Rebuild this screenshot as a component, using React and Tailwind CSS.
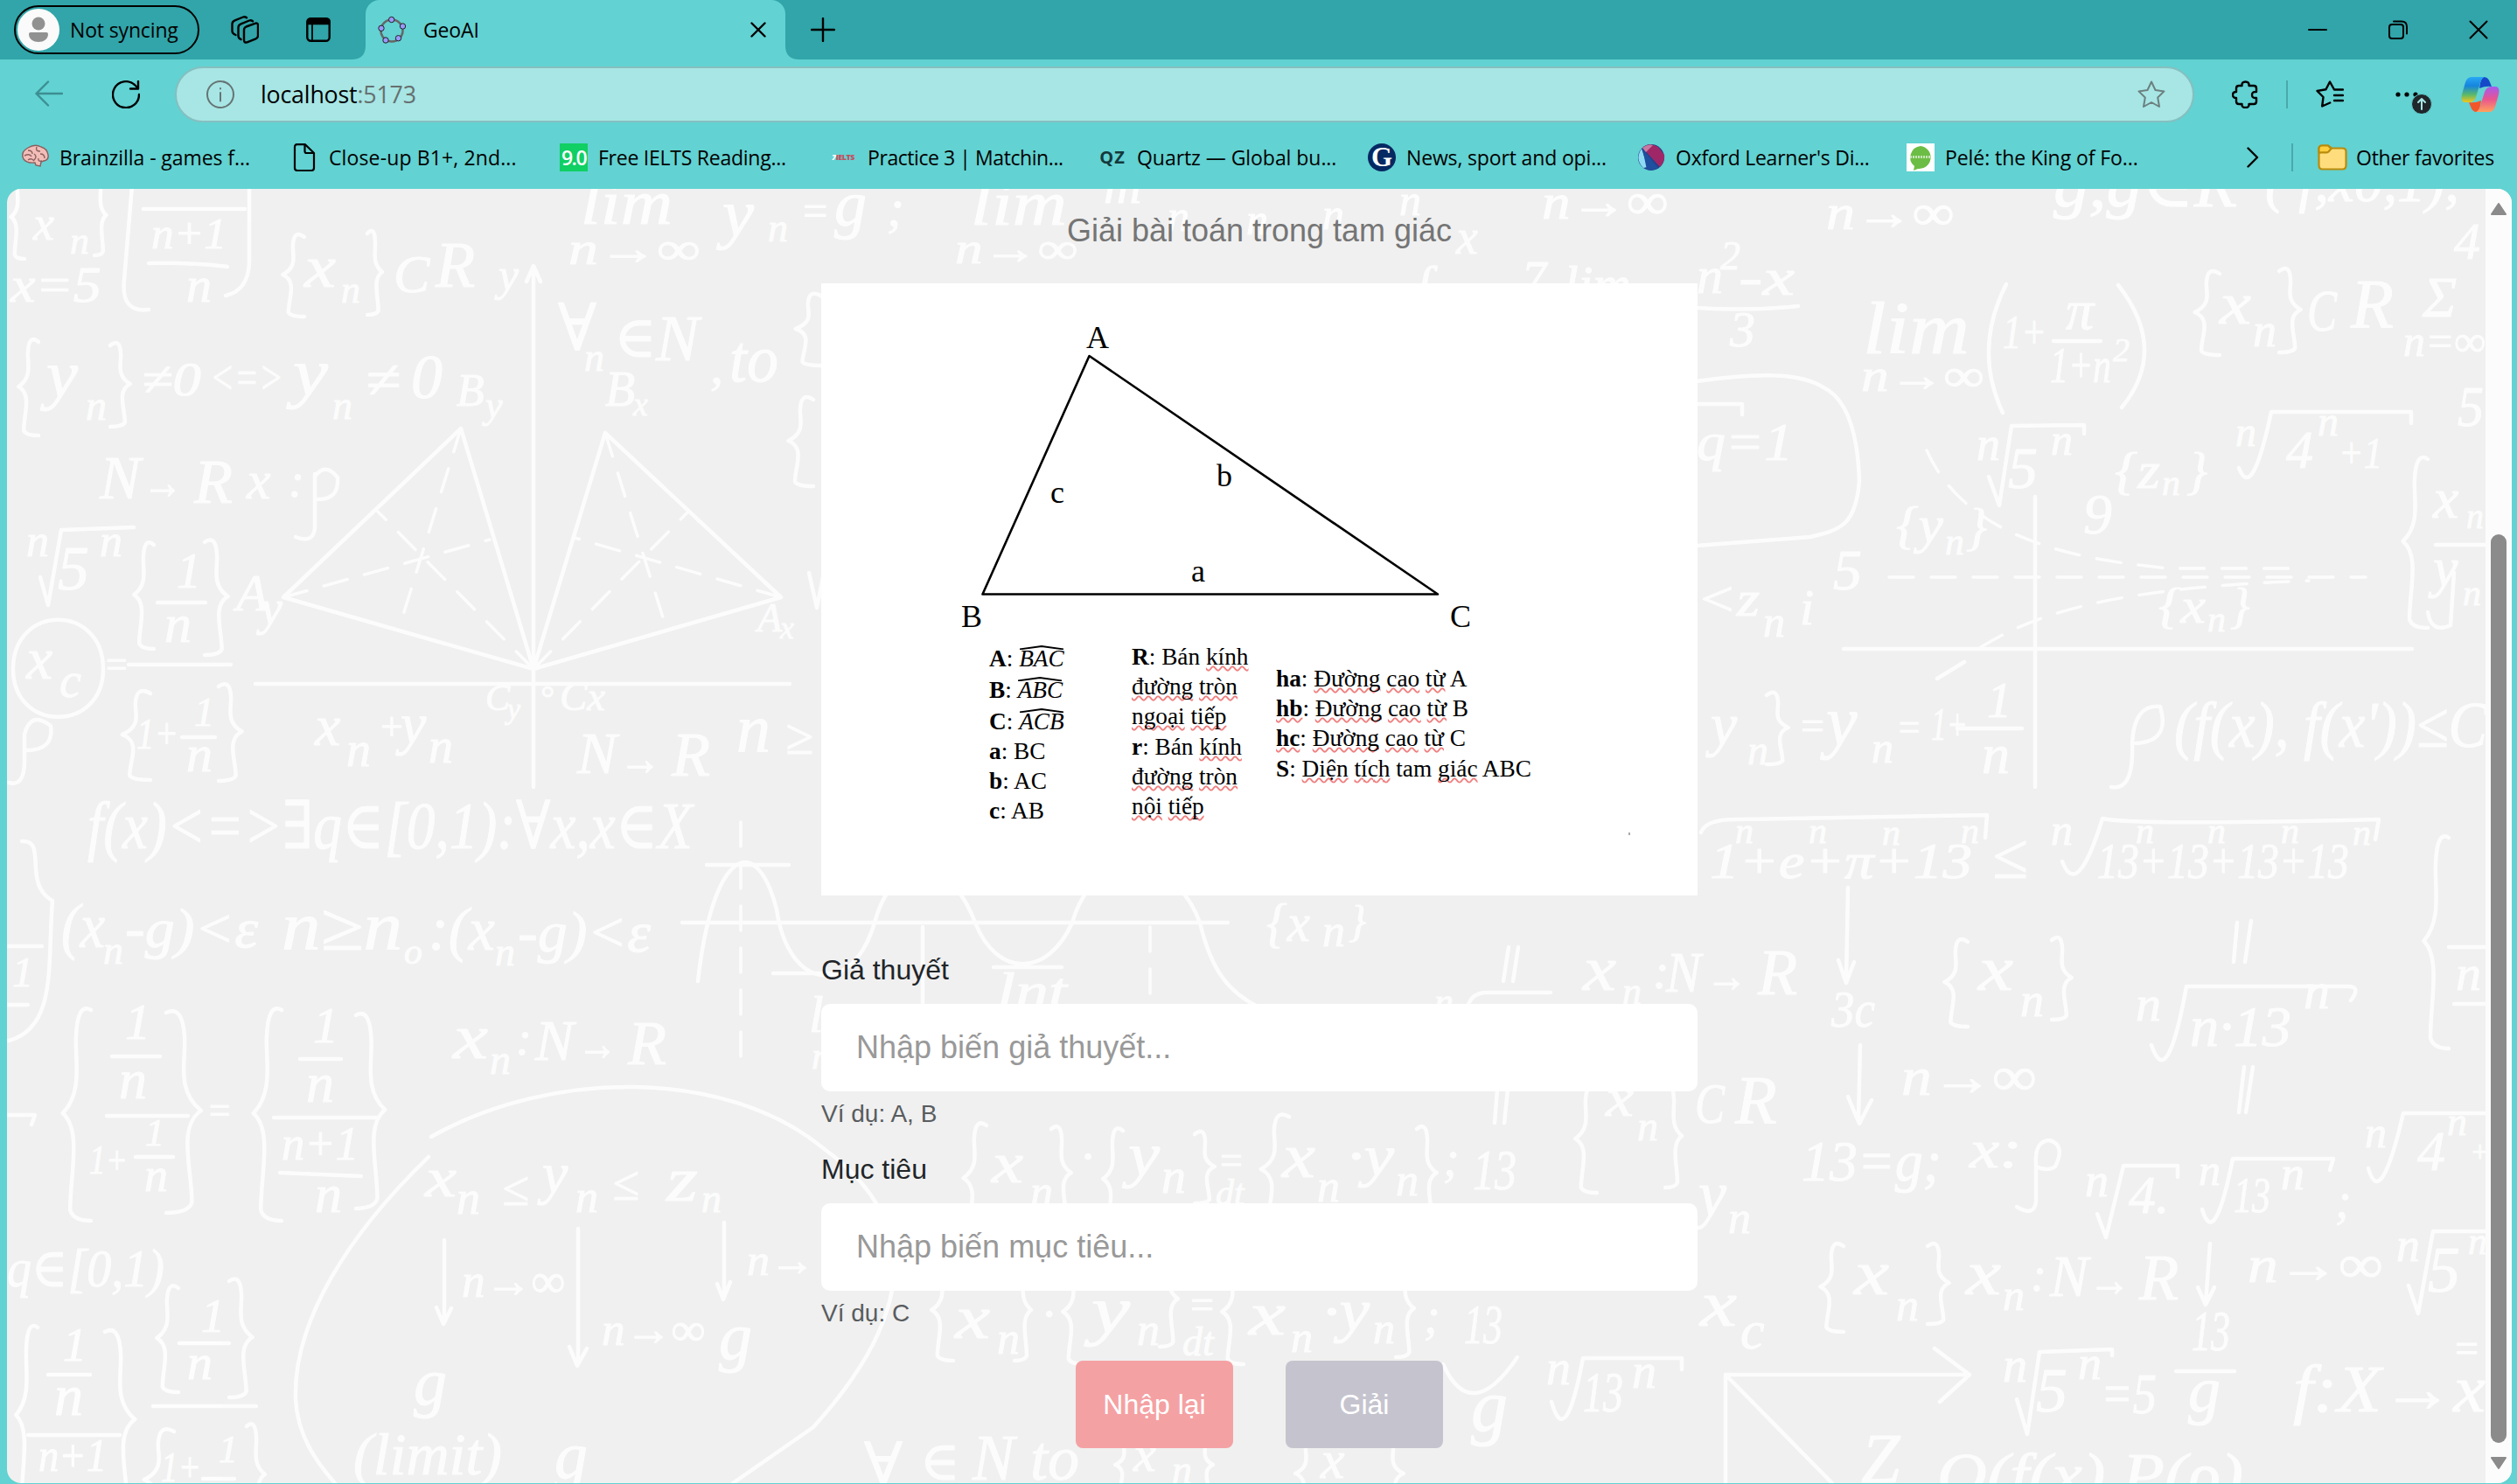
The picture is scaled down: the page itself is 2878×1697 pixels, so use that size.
import React from "react";

/* ---------- chalk formula backdrop ---------- */

// [x, baseline, size, text, optional length]
const GLYPHS = [
  [38, 274, 54, "x"], [80, 290, 44, "n"], [173, 284, 50, "n+1", 86], [213, 345, 58, "n"],
  [12, 345, 58, "x=5", 104], [348, 328, 68, "x", 36], [390, 346, 44, "n"], [450, 334, 62, "C"], [498, 328, 74, "R"],
  [570, 332, 52, "y"], [664, 256, 72, "lim", 105], [650, 302, 52, "n→∞", 150], [826, 270, 76, "y", 36], [878, 276, 46, "n"],
  [915, 258, 50, "="], [954, 258, 74, "g"], [1014, 258, 60, ";"], [1110, 257, 72, "lim", 110], [1092, 301, 50, "n→∞", 140],
  [1262, 232, 60, "m"], [1335, 264, 50, "n"], [1425, 268, 50, "n"], [1512, 262, 50, "n"], [1600, 246, 50, "n"], [1665, 290, 56, "x"],
  [1620, 345, 60, "ſ"], [1740, 338, 56, "7"], [1788, 345, 60, "lim"], [1763, 250, 58, "n→∞", 144],
  [638, 400, 74, "∀", 44], [668, 424, 46, "n"], [702, 408, 66, "∈"], [750, 412, 74, "N"], [812, 438, 60, ","], [834, 436, 76, "to", 56],
  [692, 464, 56, "B"], [724, 475, 38, "x"], [522, 464, 52, "B"], [555, 478, 44, "y"],
  [53, 454, 76, "y", 36], [98, 480, 48, "n"], [162, 452, 54, "≠0", 68], [240, 450, 54, "<=>", 84], [335, 452, 76, "y", 40], [380, 479, 46, "n"],
  [418, 455, 62, "≠", 40], [470, 455, 72, "0"], [114, 570, 70, "N"], [163, 570, 54, "→", 46], [222, 575, 72, "R"], [282, 570, 62, "x"], [330, 568, 54, ":"],
  [30, 636, 52, "n"], [66, 674, 72, "5"], [114, 636, 52, "n"], [202, 672, 56, "1"], [188, 734, 62, "n"],
  [270, 698, 60, "A"], [298, 714, 56, "y"], [866, 722, 46, "A"], [892, 730, 36, "x"], [30, 776, 68, "x"], [68, 797, 56, "c"], [118, 774, 44, "="],
  [156, 856, 50, "1+", 48], [222, 830, 46, "1"], [213, 882, 60, "n"], [360, 852, 66, "x"], [396, 876, 56, "n"], [432, 846, 46, "+"], [458, 850, 66, "y"], [490, 872, 56, "n"],
  [555, 812, 42, "C"], [580, 822, 34, "y"], [617, 812, 40, "°"], [640, 812, 46, "Cx", 52],
  [660, 884, 68, "N"], [708, 886, 54, "→", 48], [768, 887, 72, "R"], [842, 860, 78, "n"], [898, 862, 58, "≥"],
  [100, 970, 76, "f(x)<=>∃q∈[0,1):∀x,x∈X", 692], [70, 1083, 72, "(x", 50], [118, 1102, 46, "n"], [143, 1083, 64, "-g)<ε", 152],
  [322, 1086, 78, "n≥n", 138], [462, 1102, 42, "o"], [490, 1086, 70, ":(x", 76], [566, 1104, 46, "n"], [592, 1088, 66, "-g)<ε", 152],
  [14, 1128, 48, "1"], [143, 1188, 58, "1"], [136, 1256, 64, "n"], [102, 1342, 46, "1+", 44], [166, 1310, 44, "1"], [165, 1362, 54, "n"], [236, 1284, 44, "="],
  [358, 1192, 58, "1"], [350, 1260, 64, "n"], [322, 1326, 54, "n+1", 88], [360, 1386, 62, "n"],
  [518, 1210, 72, "x", 40], [560, 1228, 48, "n"], [590, 1206, 54, ":"], [612, 1212, 66, "N"], [660, 1212, 54, "→", 46], [718, 1217, 72, "R"],
  [486, 1368, 64, "x", 36], [522, 1388, 54, "n"], [574, 1378, 56, "≤"], [620, 1364, 66, "y"], [658, 1386, 52, "n"], [700, 1372, 56, "≤"], [762, 1373, 72, "z", 36], [802, 1386, 46, "n"],
  [528, 1483, 54, "n→∞", 118], [688, 1538, 52, "n→∞", 118], [854, 1458, 50, "n→", 78], [473, 1606, 76, "g"], [822, 1554, 76, "g"], [634, 1690, 76, "g"], [404, 1686, 68, "(limit)", 170],
  [8, 1471, 62, "q∈[0,1)", 180], [230, 1523, 54, "1"], [214, 1577, 58, "n"], [72, 1556, 54, "1"], [62, 1618, 66, "n"], [44, 1682, 52, "n+1", 78], [184, 1694, 48, "1+", 46], [250, 1672, 44, "1"],
  [2088, 262, 56, "n→∞", 146], [2348, 236, 72, "g,g∈R", 210], [2590, 230, 66, "( f,x0,1),", 222], [2806, 296, 60, "4"],
  [1940, 335, 60, "n"], [1967, 308, 46, "2"], [1988, 337, 60, "-x", 64], [1978, 396, 58, "3"],
  [2130, 404, 84, "lim", 122], [2128, 447, 52, "n→∞", 140], [2290, 398, 54, "1+", 50], [2362, 376, 64, "π"], [2344, 437, 56, "1+n", 70], [2416, 413, 38, "2"],
  [2538, 370, 68, "x", 36], [2576, 396, 54, "n"], [2638, 378, 68, "C", 34], [2688, 375, 80, "R"], [2770, 362, 66, "Σ"], [2748, 407, 50, "n=∞", 94], [2810, 487, 66, "5", 30],
  [1940, 526, 62, "q=1", 110], [2260, 526, 54, "n"], [2296, 558, 68, "5"], [2345, 520, 50, "n"], [2418, 558, 60, "{z", 52], [2472, 566, 42, "n"], [2500, 558, 60, "}"],
  [2556, 510, 48, "n"], [2614, 535, 62, "4"], [2650, 498, 48, "n"], [2674, 535, 50, "+1", 50], [2168, 620, 60, "{y", 54], [2224, 634, 44, "n"], [2248, 622, 60, "}"],
  [2382, 610, 66, "9"], [2096, 674, 66, "5"], [2468, 712, 56, "{x", 54], [2524, 722, 42, "n"], [2550, 712, 56, "}"],
  [2782, 592, 66, "x"], [2820, 604, 40, "n"], [2782, 670, 64, "y"], [2816, 692, 42, "n"], [1940, 704, 58, "<z", 72], [2016, 728, 50, "n"], [2058, 714, 58, "i"],
  [1956, 852, 68, "y"], [1998, 874, 48, "n"], [2056, 846, 48, "="], [2088, 852, 80, "y"], [2140, 872, 50, "n"], [2168, 846, 44, "="], [2208, 846, 52, "1+", 42], [2272, 820, 56, "1"], [2266, 884, 64, "n"],
  [2486, 854, 74, "(f(x), f(x'))≤C", 358],
  [1955, 1004, 56, "1+e+π+13", 300], [1984, 964, 42, "n"], [2068, 964, 42, "n"], [2152, 966, 42, "n"], [2242, 964, 42, "n"], [2278, 1004, 74, "≤"], [2345, 966, 50, "n"],
  [2398, 1004, 56, "13+13+13+13", 288], [2442, 964, 42, "n"], [2524, 964, 42, "n"], [2608, 964, 42, "n"], [2690, 966, 42, "n"],
  [2094, 1174, 60, "3c", 50], [2010, 1137, 74, "R"], [1810, 1132, 72, "x", 38], [1855, 1148, 44, "n"], [1890, 1130, 56, ":"], [1905, 1134, 66, "N", 40], [1950, 1134, 52, "→", 48],
  [2262, 1132, 72, "x", 40], [2310, 1162, 54, "n"], [2442, 1167, 58, "n"], [2504, 1196, 66, "n·13", 116], [2634, 1153, 60, "n"], [2808, 1132, 58, "n"],
  [1836, 1276, 62, "x", 32], [1872, 1304, 48, "n"], [1938, 1284, 66, "C", 34], [1984, 1284, 78, "R"], [2174, 1252, 62, "n→∞", 154],
  [2060, 1350, 66, "13=g;", 160], [2252, 1335, 62, "x:", 60], [2384, 1368, 54, "n"], [2434, 1387, 62, "4."], [2514, 1355, 50, "n"], [2554, 1386, 58, "13", 42], [2608, 1360, 54, "n"], [2670, 1392, 56, ";"],
  [2704, 1312, 50, "n"], [2764, 1338, 64, "4"], [2798, 1298, 46, "n"], [2824, 1328, 34, "+"], [1942, 1390, 74, "y", 32], [1976, 1410, 52, "n"], [1944, 1516, 74, "x", 42], [1990, 1542, 62, "c"],
  [2120, 1480, 72, "x", 40], [2168, 1510, 52, "n"], [2248, 1480, 72, "x", 40], [2290, 1498, 50, "n"], [2322, 1476, 54, ":"], [2344, 1482, 68, "N", 44], [2388, 1482, 54, "→", 48], [2446, 1486, 74, "R"],
  [2570, 1466, 60, "n→∞", 154], [2740, 1442, 54, "n"], [2776, 1477, 74, "5"], [2822, 1434, 44, "n"], [2506, 1544, 66, "13", 44], [2502, 1614, 74, "g"],
  [2290, 1580, 56, "n"], [2328, 1614, 72, "5"], [2376, 1577, 54, "n"], [2402, 1616, 66, "=5", 64], [2622, 1614, 76, "f:X→x", 220], [2804, 1558, 48, "="],
  [2128, 1695, 80, "Z"], [2215, 1710, 70, "O(f(x)  P(ρ)", 350],
  [1134, 1352, 66, "x", 36], [1178, 1380, 52, "n"], [1236, 1342, 58, "·"], [1290, 1344, 70, "y", 36], [1328, 1364, 56, "n"], [1392, 1342, 46, "="], [1390, 1378, 42, "dt"],
  [1466, 1346, 72, "x", 38], [1506, 1374, 52, "n"], [1540, 1344, 66, "·y", 54], [1596, 1367, 52, "n"], [1650, 1344, 56, ";"], [1684, 1360, 66, "13", 50],
  [1092, 1530, 70, "x", 40], [1140, 1548, 52, "n"], [1192, 1522, 56, "·"], [1248, 1524, 76, "y", 44], [1300, 1538, 52, "n"], [1358, 1508, 48, "="], [1352, 1550, 46, "dt"],
  [1428, 1526, 70, "x", 42], [1476, 1546, 50, "n"], [1512, 1522, 68, "·y", 54], [1570, 1536, 50, "n"], [1628, 1524, 56, ";"], [1674, 1536, 64, "13", 44],
  [1768, 1583, 56, "n"], [1810, 1614, 66, "13", 46], [1866, 1587, 56, "n"], [1682, 1636, 84, "g"],
  [988, 1698, 68, "∀", 44], [1052, 1692, 62, "∈"], [1112, 1692, 74, "N", 48], [1178, 1692, 72, "to", 56], [1296, 1682, 58, "x"], [1340, 1696, 46, "n"], [1510, 1690, 62, "x"],
  [1448, 1076, 62, "{x", 50], [1512, 1082, 52, "n"], [1542, 1070, 50, "}"], [1140, 1152, 56, "lnt", 80], [1640, 1160, 44, "n"],
  [925, 1180, 60, "l"], [928, 1222, 44, "n"],
];

// [x, top, width, height, side]
const BRACES = [
  [12, 200, 16, 96, "l"], [108, 200, 14, 92, "r"], [322, 266, 26, 96, "l"], [420, 262, 18, 98, "r"],
  [20, 386, 24, 112, "l"], [126, 390, 24, 98, "r"], [152, 618, 24, 124, "l"], [234, 615, 28, 134, "r"],
  [138, 788, 34, 104, "l"], [250, 780, 28, 113, "r"], [70, 1150, 34, 246, "l"], [190, 1153, 42, 234, "r"],
  [288, 1150, 34, 246, "l"], [407, 1156, 35, 226, "r"], [178, 1468, 26, 124, "l"], [262, 1460, 28, 138, "r"],
  [17, 1513, 26, 210, "l"], [120, 1518, 36, 210, "r"], [163, 1632, 36, 120, "l"], [282, 1626, 22, 120, "r"],
  [908, 334, 32, 84, "l"], [900, 452, 30, 104, "l"], [2508, 308, 30, 98, "l"], [2606, 305, 26, 98, "r"],
  [2746, 520, 30, 198, "l"], [2020, 790, 26, 84, "r"], [2770, 953, 30, 246, "l"], [2222, 1072, 28, 102, "l"], [2346, 1070, 24, 96, "r"],
  [1800, 1240, 26, 124, "l"], [1904, 1240, 20, 118, "r"], [2080, 1420, 28, 103, "l"], [2204, 1420, 26, 94, "r"],
  [1100, 1282, 28, 130, "l"], [1202, 1286, 24, 110, "r"], [1260, 1288, 24, 120, "l"], [1366, 1292, 24, 84, "r"], [1440, 1272, 34, 130, "l"], [1620, 1286, 24, 110, "r"],
  [1064, 1440, 26, 116, "l"], [1160, 1440, 20, 116, "r"], [1214, 1440, 26, 120, "l"], [1326, 1430, 22, 110, "r"], [1396, 1440, 26, 120, "l"], [1596, 1440, 22, 112, "r"],
  [1274, 1640, 22, 70, "l"], [1368, 1640, 20, 70, "r"], [1480, 1640, 26, 90, "l"], [1580, 1640, 26, 90, "r"],
];

const bracePath = (x, y, w, h, side) => {
  const px = (t) => (side === "l" ? x + w * t : x + w * (1 - t));
  const m = y + h * 0.5;
  return `M${px(1)} ${y + 5} Q${px(0.55)} ${y - 4} ${px(0.5)} ${y + h * 0.14} C${px(0.45)} ${y + h * 0.25} ${px(0.75)} ${y + h * 0.4} ${px(0.05)} ${m} C${px(0.7)} ${y + h * 0.58} ${px(0.3)} ${y + h * 0.78} ${px(0.3)} ${y + h * 0.95} Q${px(0.4)} ${y + h} ${px(1)} ${y + h}`;
};

const STROKES = [
  "M152 200 L142 320 Q138 358 170 354", "M285 200 V300 Q284 332 258 338", "M164 239 H280", "M170 301 Q220 300 260 305",
  "M610 305 V900 M602 322 L610 304 L618 322", "M292 782 H903",
  "M527 490 L324 683 L610 765 Z", "M692 495 L893 683 L610 765 Z",
  "M360 542 V604 Q358 622 338 614 M360 545 Q372 528 386 546 Q388 572 362 571",
  "M46 660 L55 692 L70 606 L153 603", "M180 689 H235", "M147 760 H264", "M15 765 C15 690 118 690 118 765 C118 838 15 838 15 765",
  "M208 843 H246", "M10 895 Q28 900 28 870 V840 Q35 812 58 830 Q62 858 30 858",
  "M25 962 C55 960 25 1010 60 1030 C54 1100 66 1175 10 1190", "M8 1082 H48 M8 1149 H32",
  "M798 1122 C815 970 865 950 888 1040 C902 1135 975 1140 1000 1055 C1022 975 1085 975 1115 1055 C1140 1118 1198 1118 1226 1055 C1250 970 1340 970 1372 1055 C1385 1110 1405 1135 1440 1152",
  "M808 989 H902 M780 1055 H1404 M884 1113 H960 M1136 1106 H1214 M1055 1060 V1150",
  "M128 1208 H183 M122 1276 H215 M155 1323 H198 M343 1211 H390 M313 1278 H430 M320 1341 L413 1345",
  "M8 1275 H40 L36 1286",
  "M493 1300 C630 1222 830 1222 940 1312 C1062 1400 1040 1510 930 1632 L838 1696",
  "M490 1323 C400 1410 335 1510 338 1600 C340 1640 360 1670 383 1696",
  "M508 1418 V1510 M499 1495 L507 1514 L516 1496 M661 1405 V1560 M651 1540 L660 1562 L671 1542 M828 1398 V1484 M820 1468 L827 1486 L835 1466",
  "M205 1536 H262 M175 1608 H293 M55 1572 H103 M32 1641 H137 M232 1691 H268",
  "M925 655 L934 695 L945 640",
  "M1940 352 Q2000 356 2056 350", "M2294 325 Q2256 400 2290 472 M2422 326 Q2480 400 2426 466 M2348 390 H2402",
  "M1940 436 C2010 426 2058 426 2085 443 C2120 460 2125 520 2126 550 C2122 600 2105 606 2070 614 L1940 624 M1940 462 H1992 V474",
  "M2274 545 L2286 578 L2300 487 L2383 486 V496", "M2560 535 Q2575 575 2597 471 H2757 V484",
  "M2327 568 V900 M2108 742 H2758 M2215 776 L2246 757", "M2785 623 H2842 M2806 655 L2802 715 Q2780 725 2776 700",
  "M2238 833 H2312", "M2414 900 Q2440 905 2438 850 Q2440 805 2470 808 Q2482 848 2442 850",
  "M1945 952 Q1950 936 1990 937 L2272 932 L2270 958", "M2358 985 Q2375 1030 2404 936 Q2440 944 2720 937 L2716 960",
  "M2113 1015 L2111 1120 M2102 1098 L2111 1124 L2120 1100 M2127 1195 L2125 1280 M2113 1254 L2126 1285 L2140 1258",
  "M2558 1055 L2554 1100 M2574 1053 L2567 1100 M2566 1220 L2560 1272 M2576 1220 L2568 1272",
  "M2460 1195 Q2478 1250 2500 1128 H2685 Q2700 1128 2688 1144", "M2800 1083 H2842 M2806 1148 H2842",
  "M2398 1388 L2408 1415 L2428 1333 L2490 1333 V1346", "M2518 1383 Q2532 1430 2553 1325 L2668 1325 L2664 1338",
  "M2708 1336 Q2722 1385 2748 1273 H2842",
  "M2328 1332 V1374 Q2326 1392 2306 1380 M2328 1332 Q2326 1304 2344 1304 Q2362 1310 2350 1334 Q2342 1340 2328 1334",
  "M2527 1422 L2522 1490 M2513 1472 L2522 1492 L2532 1472", "M2754 1470 L2765 1502 L2782 1408 H2842",
  "M2488 1568 H2555", "M2306 1600 L2318 1640 L2332 1546 L2415 1543 V1550",
  "M1973 1696 V1572 H2246 M2212 1542 L2252 1572 L2218 1603 M1973 1572 L2095 1696",
  "M1774 1603 Q1790 1660 1810 1553 H1923 V1566", "M1650 1560 Q1682 1630 1735 1552",
  "M1725 1083 L1719 1122 M1736 1083 L1730 1122 M1712 1246 L1709 1284 M1724 1246 L1720 1284 M1678 1152 Q1682 1135 1700 1135 H1773",
];

const DASHES = [
  "M527 490 L457 716 M324 683 L560 617 M610 765 L432 585", "M692 495 L763 722 M893 683 L657 615 M610 765 L787 585",
  "M847 940 V1222 M1315 1060 V1148", "M2160 660 H2705",
  "M2203 515 C2250 620 2380 640 2480 650 L2635 650", "M2265 740 C2330 700 2420 672 2640 664",
];

function Backdrop() {
  return (
    <svg className="col-start-1 row-start-1 block h-[1480px] w-[2834px] opacity-85" viewBox="8 216 2834 1480" fill="none" stroke="#fff" strokeWidth="4.5" strokeLinecap="round" strokeLinejoin="round" aria-hidden="true">
      {STROKES.map((d) => <path key={d} d={d} />)}
      {DASHES.map((d) => <path key={d} d={d} strokeWidth="3.5" strokeDasharray="28 20" />)}
      {BRACES.map((b) => <path key={b.join()} d={bracePath(...b)} />)}
      <g className="font-['Liberation_Serif','DejaVu_Serif',serif] italic" fill="#fff" strokeWidth="1">
        {GLYPHS.map(([x, y, s, t, len]) => (
          <text key={`${x}-${y}`} x={x} y={y} fontSize={s} textLength={len} lengthAdjust="spacingAndGlyphs">{t}</text>
        ))}
      </g>
    </svg>
  );
}

/* ---------- browser chrome ---------- */

function Svg({ w = 32, h = 32, box, className = "", children, sw = 2.4 }) {
  return (
    <svg width={w} height={h} viewBox={box || `0 0 ${w} ${h}`} fill="none" stroke="currentColor" strokeWidth={sw} strokeLinecap="round" strokeLinejoin="round" className={`shrink-0 ${className}`}>
      {children}
    </svg>
  );
}

function TitleBar() {
  return (
    <div className="flex h-[68px] items-center bg-[#31a5a9] text-black">
      <div className="ml-4 flex h-14 w-[212px] items-center rounded-full border-2 border-black pl-0.5">
        <svg width="48" height="48" viewBox="0 0 48 48" className="shrink-0">
          <circle cx="24" cy="24" r="24" fill="#fafafa" />
          <circle cx="24" cy="17" r="7.5" fill="#919191" />
          <path d="M13 29q0-2 2-2h18q2 0 2 2c0 12-22 12-22 0z" fill="#919191" />
        </svg>
        <span className="ml-3 text-[23px] tracking-[-0.15px] whitespace-nowrap">Not syncing</span>
      </div>
      <Svg className="ml-9" sw={2.4}>
        <path d="M15 16.500q0-3 2.500-4l10-3.700q3.500-1 3.500 2v12q0 2.500-2.500 3.500l-10 4q-3.500 1-3.500-2.500z" />
        <path d="M11.500 27q-3-1-3-4V13.500q0-3 3-4.200l9.500-3.800q2-.8 4 .8M5.500 22q-4-1.500-4-4.500V9.500q0-3 3-4.200l9.500-3.800q2-.8 4 .8" />
      </Svg>
      <Svg w={28} h={28} className="ml-[54px]" sw={2.4}>
        <rect x="1.300" y="1.300" width="25.400" height="25.400" rx="4" />
        <path d="M2 3q1-1.500 3-1.500h18q3 0 3.500 2V7H2z" fill="currentColor" />
        <path d="M7 8v18" strokeWidth="1.800" />
      </Svg>
      <div className="ml-6 flex h-[68px] items-end">
        <svg width="16" height="16" viewBox="0 0 16 16"><path d="M16 0v16H0Q16 16 16 0z" fill="#62d2d2" /></svg>
        <div className="flex h-[68px] w-[480px] items-center rounded-t-2xl bg-[#62d2d2]">
          <svg width="32" height="32" viewBox="0 0 32 32" className="ml-[14px] shrink-0">
            <circle cx="16" cy="17" r="12.500" fill="none" stroke="#666" strokeWidth="2.500" />
            {[[15.7, 4.5], [28.5, 12], [23.5, 25.700], [9, 28], [4, 14.300]].map(([x, y]) => <circle key={x} cx={x} cy={y} r="3.200" fill="#9999ff" stroke="#222" strokeWidth="1" />)}
          </svg>
          <span className="ml-5 text-[23px] tracking-[-0.15px]">GeoAI</span>
          <Svg w={18} h={18} className="mr-[22px] ml-auto"><path d="M1.500 1.500l15 15M16.500 1.500l-15 15" /></Svg>
        </div>
        <svg width="16" height="16" viewBox="0 0 16 16"><path d="M0 0v16h16Q0 16 0 0z" fill="#62d2d2" /></svg>
      </div>
      <Svg w={28} h={28} className="ml-[13px]"><path d="M14 1v26M1 14h26" /></Svg>
      <Svg w={22} h={22} className="ml-auto" sw={2}><path d="M1 11h20" /></Svg>
      <Svg w={22} h={22} className="ml-[70px]" sw={2}>
        <rect x="1" y="5" width="16" height="16" rx="3" /><path d="M6 1.500h9q6 0 6 6v8" />
      </Svg>
      <Svg w={22} h={22} className="mr-[33px] ml-[70px]" sw={2}><path d="M1.500 1.500l19 19M20.500 1.500l-19 19" /></Svg>
    </div>
  );
}

function Toolbar() {
  return (
    <div className="flex h-20 items-center text-black">
      <Svg className="ml-10 text-[#3c8f92]"><path d="M31 15H1.500M15 1.500L1.500 15 15 28.500" /></Svg>
      <Svg className="ml-14" sw={2.400}><path d="M31 16A15 15 0 1 1 26 5l4 4M30 1v8.500h-9" /></Svg>
      <div className="ml-10 flex h-16 w-[2309px] items-center rounded-full border-2 border-[#86bfc0] bg-[#a7e6e4]">
        <Svg className="ml-[34px] text-[#667474]" sw={2}><circle cx="16" cy="16" r="15" /><path d="M16 14v9.500M16 9v.4" /></Svg>
        <span className="ml-[30px] text-[26.800px] tracking-[-0.200px]">localhost<span className="text-[#666f6f]">:5173</span></span>
        <Svg className="mr-[31px] ml-auto text-[#6c8080]" sw={2}><path d="M16 1.500l4.500 9.500 10 1.400-7.300 7.100 1.800 10.500L16 25l-9 5 1.800-10.500L1.500 12.400l10-1.400z" /></Svg>
      </div>
      <Svg w={30} className="ml-[43px]" sw={2.400}>
        <path d="M8 6h3.500q-.5-4.500 4-4.500T19.500 6H25q3 0 3 3v4q-5-.5-5 3.500t5 3.500V24q0 3-3 3h-5.500q.5 4-4 4t-4-4H8q-3 0-3-3v-4q-4 0-4-3.500T5 13V9q0-3 3-3z" />
      </Svg>
      <div className="ml-8 h-8 w-0.5 bg-[#4aa9ab]" />
      <Svg className="ml-8" sw={2.400}><path d="M31 10.500H21L16 1.500l-4.500 8.800-10 1.700 7 7-1.300 10.500 9-4M21 17h10M21 23h10" /></Svg>
      <Svg w={44} h={44} className="ml-[58px]">
        <g fill="currentColor" stroke="none"><circle cx="4" cy="22" r="2.600" /><circle cx="14" cy="22" r="2.600" /><circle cx="24" cy="22" r="2.600" /></g>
        <circle cx="31" cy="33" r="11.500" fill="#20262a" stroke="#62d2d2" strokeWidth="1" />
        <path d="M31 39V27.500M27 31l4-4 4 4" stroke="#a7e6e4" strokeWidth="2" />
      </Svg>
      <svg width="44" height="40" viewBox="0 0 44 40" className="ml-[32px] shrink-0">
        <defs>
          <linearGradient id="cpA" x1="0" y1="0" x2="0" y2="1"><stop offset="0" stopColor="#29a8f5" /><stop offset=".35" stopColor="#1585dd" /><stop offset=".7" stopColor="#5ab96a" /><stop offset="1" stopColor="#f5c51a" /></linearGradient>
          <linearGradient id="cpB" x1="0" y1="0" x2="0" y2="1"><stop offset="0" stopColor="#a45af0" /><stop offset=".5" stopColor="#e9548f" /><stop offset="1" stopColor="#ffa25c" /></linearGradient>
        </defs>
        <path d="M26 0Q31 0 33 6L35 11Q28 10 21 13L22 7Q24 0 26 0z" fill="#1549c8" />
        <path d="M18 40Q13 40 11 34L9 29Q16 30 23 27L22 33Q20 40 18 40z" fill="#f2572b" />
        <path d="M12 0H27Q23 1 21 10L17 23Q15 29 9 29H5Q-1 29 1 20L5 6Q7 0 12 0z" fill="url(#cpA)" />
        <path d="M32 40H17Q21 39 23 30L27 17Q29 11 35 11H39Q45 11 43 20L39 34Q37 40 32 40z" fill="url(#cpB)" />
      </svg>
    </div>
  );
}

const ICONS = {
  brain: (
    <svg width="32" height="32" viewBox="0 0 32 32"><path d="M8 5q8-5 15-1 7 2 8 9 1 6-5 7l-3 1-1 5-5-1-1-3q-9 1-13-4-4-8 5-13z" fill="#f3bdb8" stroke="#8a5f5e" strokeWidth="1.400" /><path d="M8 8q5 0 5 4M18 4q-2 5 4 5M4 14q6-3 8 1M15 12q4 3 0 7M22 12q5 0 5 5M8 19q4-3 7 1M20 17q-1 4 4 3" fill="none" stroke="#8a5f5e" strokeWidth="1.400" /></svg>
  ),
  file: (
    <svg width="32" height="32" viewBox="0 0 32 32" fill="none" stroke="#000" strokeWidth="2.200" strokeLinejoin="round"><path d="M7.500 1.200H17L27 11v17q0 3-3 3H8q-3 0-3-3V4q0-2.800 2.500-2.800zM16.500 1.500V9q0 2 2 2H27" /></svg>
  ),
  nine: <span className="flex h-8 w-8 items-center justify-center bg-[#10cf63] text-[23px] font-semibold tracking-[-1.500px] text-white">9.0</span>,
  ielts: <span className="flex h-8 w-8 items-center justify-center text-[9px] font-extrabold tracking-[-0.500px] text-[#c2505f]"><i className="text-white">7</i>IELTS</span>,
  qz: <span className="flex h-8 w-8 items-center justify-center text-[20px] font-bold tracking-[1px] text-[#14393b]">QZ</span>,
  guardian: (
    <span className="flex h-8 w-8 items-center justify-center rounded-full bg-[#052962] pb-0.5 font-['Liberation_Serif',serif] text-[31px] leading-none font-bold text-white">G</span>
  ),
  oxford: (
    <svg width="32" height="32" viewBox="0 0 32 32"><circle cx="16" cy="16" r="15" fill="#22408c" /><path d="M6 5Q14-2 24 4l7 9q1 8-5 14z" fill="#a02767" /><path d="M6 5q6-5 12-3l-8 8z" fill="#c87aa0" /><path d="M5 6q-8 12 2 22l5-1z" fill="#8fdcf4" /><path d="M6 6l18 22q-7 4-13 2z" fill="#1f4f9f" /></svg>
  ),
  leaf: (
    <svg width="32" height="32" viewBox="0 0 32 32"><path d="M0 0h32v32H0z" fill="#fff" /><path d="M16 3a13 13 0 1 1-3 26l-5 2 1-5A13 13 0 0 1 16 3z" fill="#6cbd45" /><path d="M4 15.500h24" stroke="#c7e6b8" strokeWidth="3" strokeDasharray="2 1" /></svg>
  ),
};

const BOOKMARKS = [
  ["brain", "Brainzilla - games f...", "tracking-[-0.070px]"],
  ["file", "Close-up B1+, 2nd...", "tracking-[0.130px]"],
  ["nine", "Free IELTS Reading...", "tracking-[-0.250px]"],
  ["ielts", "Practice 3 | Matchin...", "tracking-[-0.430px]"],
  ["qz", "Quartz — Global bu...", "tracking-[-0.050px]"],
  ["guardian", "News, sport and opi...", "tracking-[-0.150px]"],
  ["oxford", "Oxford Learner's Di...", "tracking-[-0.250px]"],
  ["leaf", "Pelé: the King of Fo...", "tracking-[-0.080px]"],
];

function BookmarksBar() {
  return (
    <div className="flex h-[68px] items-center pb-1 pl-6 text-[23px] text-black">
      {BOOKMARKS.map(([icon, label, track]) => (
        <div key={label} className="flex w-[308px] shrink-0 items-center gap-3 whitespace-nowrap">
          {ICONS[icon]}
          <span className={track}>{label}</span>
        </div>
      ))}
      <Svg w={14} h={24} className="ml-[81px]"><path d="M1.500 1.500L12 12 1.500 22.500" /></Svg>
      <div className="ml-[37px] h-8 w-0.5 bg-[#4aa9ab]" />
      <svg width="34" height="30" viewBox="0 0 34 30" className="ml-7 shrink-0">
        <path d="M1.500 5q0-3.500 3.500-3.500h7l4 3h12.500q4 0 4 4v15.500q0 4.500-4 4.500H5.500q-4 0-4-4.500z" fill="#ffdd7d" stroke="#b98b0b" strokeWidth="2.200" />
        <path d="M1.500 9V5q0-3.500 3.500-3.500h7l3.500 3.500-3 3.500q-.8.800-2 .800H4q-2 0-2.500 1z" fill="#ffcf3f" stroke="#b98b0b" strokeWidth="2.200" />
      </svg>
      <span className="ml-[10px] tracking-[-0.250px] whitespace-nowrap">Other favorites</span>
    </div>
  );
}

/* ---------- page ---------- */

function W({ children }) {
  return <span className="underline decoration-[#f08080] decoration-wavy decoration-[1.500px] underline-offset-[1px] [text-decoration-skip-ink:none]">{children}</span>;
}

function Angle({ name, children }) {
  return (
    <p className="flex h-9 items-end leading-[34px]">
      <b>{name}</b>:&nbsp;
      <span className="flex flex-col items-center">
        <svg width="50" height="5" viewBox="0 0 50 5" className="-mb-[7px]"><path d="M0 4.500L25 1l25 3.500" fill="none" stroke="#000" strokeWidth="1.800" /></svg>
        <i>{children}</i>
      </span>
    </p>
  );
}

function Figure() {
  return (
    <div className="h-[700px] w-[1002px] bg-white font-['Liberation_Serif',serif] text-[27.300px] leading-[34.200px] text-black">
      <svg className="block h-[410px] w-[1002px]" viewBox="939 324 1002 410">
        <path d="M1245.500 407L1123.500 679.500H1644Z" fill="none" stroke="#000" strokeWidth="2.600" strokeLinejoin="round" />
        <g fontSize="36">
          <text x="1242" y="398">A</text><text x="1201" y="575">c</text><text x="1391" y="556">b</text>
          <text x="1362" y="665">a</text><text x="1099" y="717">B</text><text x="1658" y="717">C</text>
        </g>
      </svg>
      <div className="flex whitespace-nowrap">
        <div className="ml-[192px] w-[163px]">
          <Angle name="A">BAC</Angle>
          <Angle name="B">ABC</Angle>
          <Angle name="C">ACB</Angle>
          <p><b>a</b>: BC</p>
          <p><b>b</b>: AC</p>
          <p><b>c</b>: AB</p>
        </div>
        <div className="w-[165px]">
          <p><b>R</b>: Bán <W>kính</W></p>
          <p><W>đường</W> <W>tròn</W></p>
          <p><W>ngoại</W> <W>tiếp</W></p>
          <p><b>r</b>: Bán <W>kính</W></p>
          <p><W>đường</W> <W>tròn</W></p>
          <p><W>nội</W> <W>tiếp</W></p>
        </div>
        <div className="pt-[25px]">
          <p><b>ha</b>: <W>Đường</W> <W>cao</W> <W>từ</W> A</p>
          <p><b><W>hb</W></b>: <W>Đường</W> <W>cao</W> <W>từ</W> B</p>
          <p><b><W>hc</W></b>: <W>Đường</W> <W>cao</W> <W>từ</W> C</p>
          <p><b>S</b>: <W>Diện</W> <W>tích</W> tam <W>giác</W> ABC</p>
        </div>
      </div>
      <div className="mt-[7px] ml-[923px] h-[3px] w-0.5 bg-[#aaa]" />
    </div>
  );
}

function Field({ label, placeholder, hint }) {
  return (
    <div className="h-[228px] w-[1002px]">
      <label className="block h-[63px] text-[32px] leading-[48px] text-[#212529]">{label}</label>
      <input placeholder={placeholder} className="block h-[100px] w-full rounded-[10px] bg-white px-10 text-[36px] outline-none placeholder:text-[#999]" />
      <p className="text-[28px] leading-[52px] text-[#595c5f]">{hint}</p>
    </div>
  );
}

export default function App() {
  return (
    <div className="h-[1697px] w-[2878px] overflow-hidden bg-[#62d2d2] font-['Open_Sans','Noto_Sans',sans-serif]">
      <TitleBar />
      <Toolbar />
      <BookmarksBar />
      <div className="ml-2 flex h-[1480px] w-[2864px] overflow-hidden rounded-2xl bg-[#f0f0f0]">
        <div className="grid w-[2834px]">
          <Backdrop />
          <main className="z-10 col-start-1 row-start-1 flex flex-col items-center pl-[30px] font-['Liberation_Sans',Arial,sans-serif]">
            <h1 className="mt-[21px] text-[36px] leading-[54px] text-[#757575]">Giải bài toán trong tam giác</h1>
            <div className="mt-[33px]"><Figure /></div>
            <div className="mt-[61px]">
              <Field label="Giả thuyết" placeholder="Nhập biến giả thuyết..." hint="Ví dụ: A, B" />
              <Field label="Mục tiêu" placeholder="Nhập biến mục tiêu..." hint="Ví dụ: C" />
            </div>
            <div className="mt-[15px] flex gap-[60px] text-[32px] text-white">
              <button className="h-[100px] w-[180px] rounded-lg bg-[#f49ea0]/97">Nhập lại</button>
              <button className="h-[100px] w-[180px] rounded-lg bg-[#c3c2cc]/97">Giải</button>
            </div>
          </main>
        </div>
        <div className="flex w-[30px] flex-col items-center bg-[#fcfcfc] pt-4">
          <svg width="18" height="14" viewBox="0 0 18 14"><path d="M9 1L17 13H1z" fill="#8b8b8b" stroke="#8b8b8b" strokeWidth="2" strokeLinejoin="round" /></svg>
          <div className="mt-[365px] h-[1039px] w-[18px] rounded-full bg-[#8b8b8b]" />
          <svg width="18" height="14" viewBox="0 0 18 14" className="mt-4"><path d="M9 13L17 1H1z" fill="#8b8b8b" stroke="#8b8b8b" strokeWidth="2" strokeLinejoin="round" /></svg>
        </div>
      </div>
    </div>
  );
}
